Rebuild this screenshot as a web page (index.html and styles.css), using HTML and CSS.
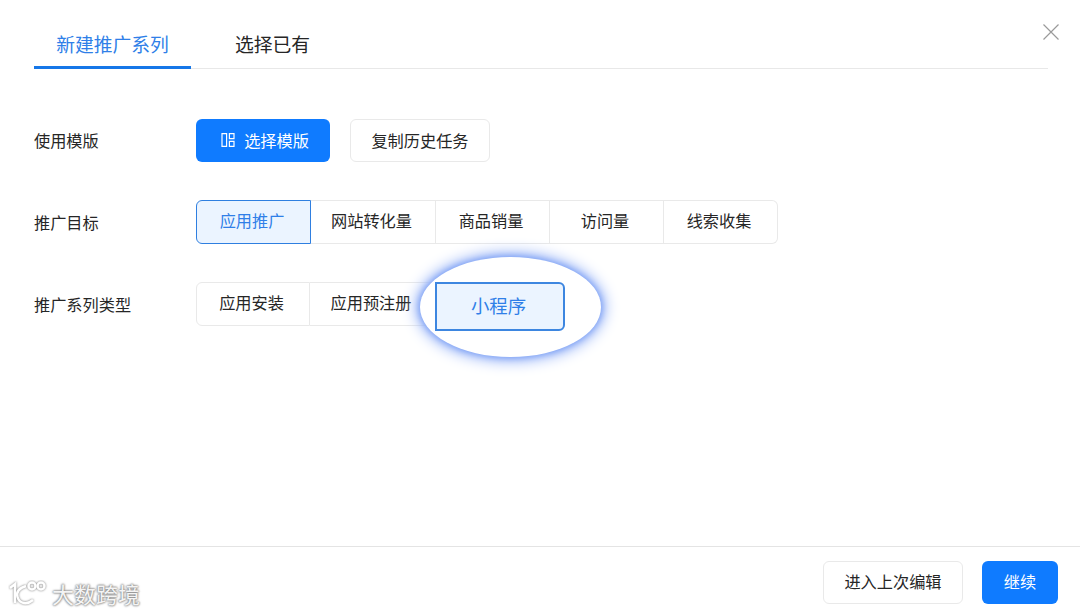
FILE: index.html
```html
<!DOCTYPE html>
<html lang="zh">
<head>
<meta charset="utf-8">
<title>新建推广系列</title>
<link rel="stylesheet" href="styles.css">
</head>
<body>
<div class="dialog">
  <header class="tabs">
    <div class="tab tab-active">新建推广系列</div>
    <div class="tab">选择已有</div>
  </header>
  <svg class="close" viewBox="0 0 16 16" width="16" height="16" aria-label="关闭"><path d="M0.5 0.5 15.5 15.5M15.5 0.5 0.5 15.5" stroke="#9a9a9a" stroke-width="1.2" fill="none"/></svg>
  <main class="form">
    <div class="row">
      <div class="label">使用模版</div>
      <div class="actions">
        <button class="btn btn-primary btn-template">
          <svg class="tpl-icon" viewBox="0 0 14 14" width="14" height="14"><path d="M1 .7h4.6v12.6H1zM8.4.7H13v5H8.4zM8.4 8.3H13v5H8.4z" fill="none" stroke="#fff" stroke-width="1.2"/></svg>
          选择模版
        </button>
        <button class="btn btn-default btn-history">复制历史任务</button>
      </div>
    </div>
    <div class="row">
      <div class="label">推广目标</div>
      <div class="seg">
        <div class="seg-item seg-selected w115">应用推广</div>
        <div class="seg-item w125">网站转化量</div>
        <div class="seg-item w114">商品销量</div>
        <div class="seg-item w114">访问量</div>
        <div class="seg-item w114">线索收集</div>
      </div>
    </div>
    <div class="row">
      <div class="label">推广系列类型</div>
      <div class="seg seg-spot">
        <div class="seg-item w114">应用安装</div>
        <div class="seg-item w126 seg-last">应用预注册</div>
        <div class="spotlight"><div class="spot-btn">小程序</div></div>
      </div>
    </div>
  </main>
  <footer class="footer">
    <div class="watermark">
      <svg class="wm-logo" viewBox="0 0 44 26" width="44" height="26"><g class="wm-stroke" fill="none"><path d="M2 8 7 4V23"/><path d="M18 6C11 8 8 12 9.500 17 11.500 24 19 25 25 20"/><circle cx="24" cy="6" r="3.500"/><circle cx="33" cy="6" r="3.500"/></g></svg>
      <span class="wm-text">大数跨境</span>
    </div>
    <div class="footer-actions">
      <button class="btn btn-default btn-last">进入上次编辑</button>
      <button class="btn btn-primary btn-next">继续</button>
    </div>
  </footer>
</div>
</body>
</html>
```

FILE: styles.css
```css
* { box-sizing: border-box; }
html, body { margin: 0; padding: 0; }
body {
  width: 1080px;
  height: 615px;
  background: #fff;
  overflow: hidden;
  font-family: "Noto Sans CJK SC", "Noto Sans", sans-serif;
  color: #262626;
}
.dialog {
  position: relative;
  height: 615px;
  display: flex;
  flex-direction: column;
}
.tabs {
  display: flex;
  height: 69px;
  margin: 0 32px 0 34px;
  border-bottom: 1px solid #e8e8e8;
}
.tab {
  width: 157px;
  height: 69px;
  font-size: 18.8px;
  line-height: 26px;
  padding-top: 31px;
  text-align: center;
  margin-right: 4px;
}
.tab:last-child { width: 155px; }
.tab-active {
  color: #2f7fe8;
  border-bottom: 3px solid #1677e8;
}
.close {
  position: absolute;
  left: 1043px;
  top: 24px;
}
.form {
  flex: 1;
  padding: 49px 0 0 34px;
  display: flex;
  flex-direction: column;
  gap: 38px;
}
.row {
  display: flex;
  align-items: center;
  height: 44px;
}
.label {
  width: 162px;
  font-size: 16.2px;
  line-height: 24px;
  padding-bottom: 1px;
  color: #262626;
}
.actions {
  display: flex;
  gap: 20px;
}
.btn {
  height: 43px;
  border-radius: 6px;
  font-family: inherit;
  font-size: 16.2px;
  padding: 0;
  display: flex;
  align-items: center;
  justify-content: center;
}
.btn-primary {
  background: #0f7bff;
  border: 0;
  color: #fff;
}
.btn-default {
  background: #fff;
  border: 1px solid #e9e9e9;
  color: #262626;
}
.btn-template { width: 134px; padding-left: 4px; }
.btn-history { width: 140px; }
.tpl-icon { margin-right: 9px; }
.seg {
  display: flex;
  position: relative;
  height: 44px;
}
.seg-item {
  height: 44px;
  border: 1px solid #e9e9e9;
  border-left: 0;
  background: #fff;
  font-size: 16.2px;
  line-height: 39px;
  padding-right: 3px;
  text-align: center;
}
.seg-item:first-child {
  border-left: 1px solid #e9e9e9;
  border-radius: 6px 0 0 6px;
}
.seg-item:last-child { border-radius: 0 6px 6px 0; }
.w114 { width: 114px; }
.w115 { width: 115px; }
.w125 { width: 125px; }
.w126 { width: 126px; }
.seg-item.seg-selected {
  border: 1.5px solid #2f7fe0;
  background: #ebf4ff;
  color: #2f7fe8;
}
.spotlight {
  position: absolute;
  left: 224px;
  top: -25px;
  width: 181px;
  height: 100px;
  border-radius: 50%;
  background: #fff;
  box-shadow: 0 0 6px 1px #7a9ff5, 0 0 14px 5px #a5bdf8;
}
.spot-btn {
  position: absolute;
  left: 15px;
  top: 25px;
  width: 130px;
  height: 49px;
  border: 2px solid #3d86e0;
  border-radius: 0 6px 6px 0;
  background: #ebf4ff;
  color: #2f7fe8;
  font-size: 18.4px;
  line-height: 43px;
  padding-right: 3px;
  text-align: center;
}
.footer {
  height: 69px;
  border-top: 1px solid #e4e4e4;
  display: flex;
  justify-content: space-between;
  padding: 14px 22px 0 8px;
}
.footer-actions {
  display: flex;
  gap: 19px;
}
.footer-actions .btn { padding-bottom: 3px; }
.btn-last { width: 140px; }
.btn-next { width: 76px; }
.watermark {
  display: flex;
  align-items: center;
  height: 36px;
  margin-top: 14px;
}
.wm-stroke {
  stroke: #fff;
  stroke-width: 2.500;
  filter: drop-shadow(0 0 1px #777);
}
.wm-text {
  font-size: 22px;
  line-height: 30px;
  color: #f4f4f4;
  text-shadow: 0 0 2px #888, 0 0 2px #888, 0 0 3px #aaa;
}
```
